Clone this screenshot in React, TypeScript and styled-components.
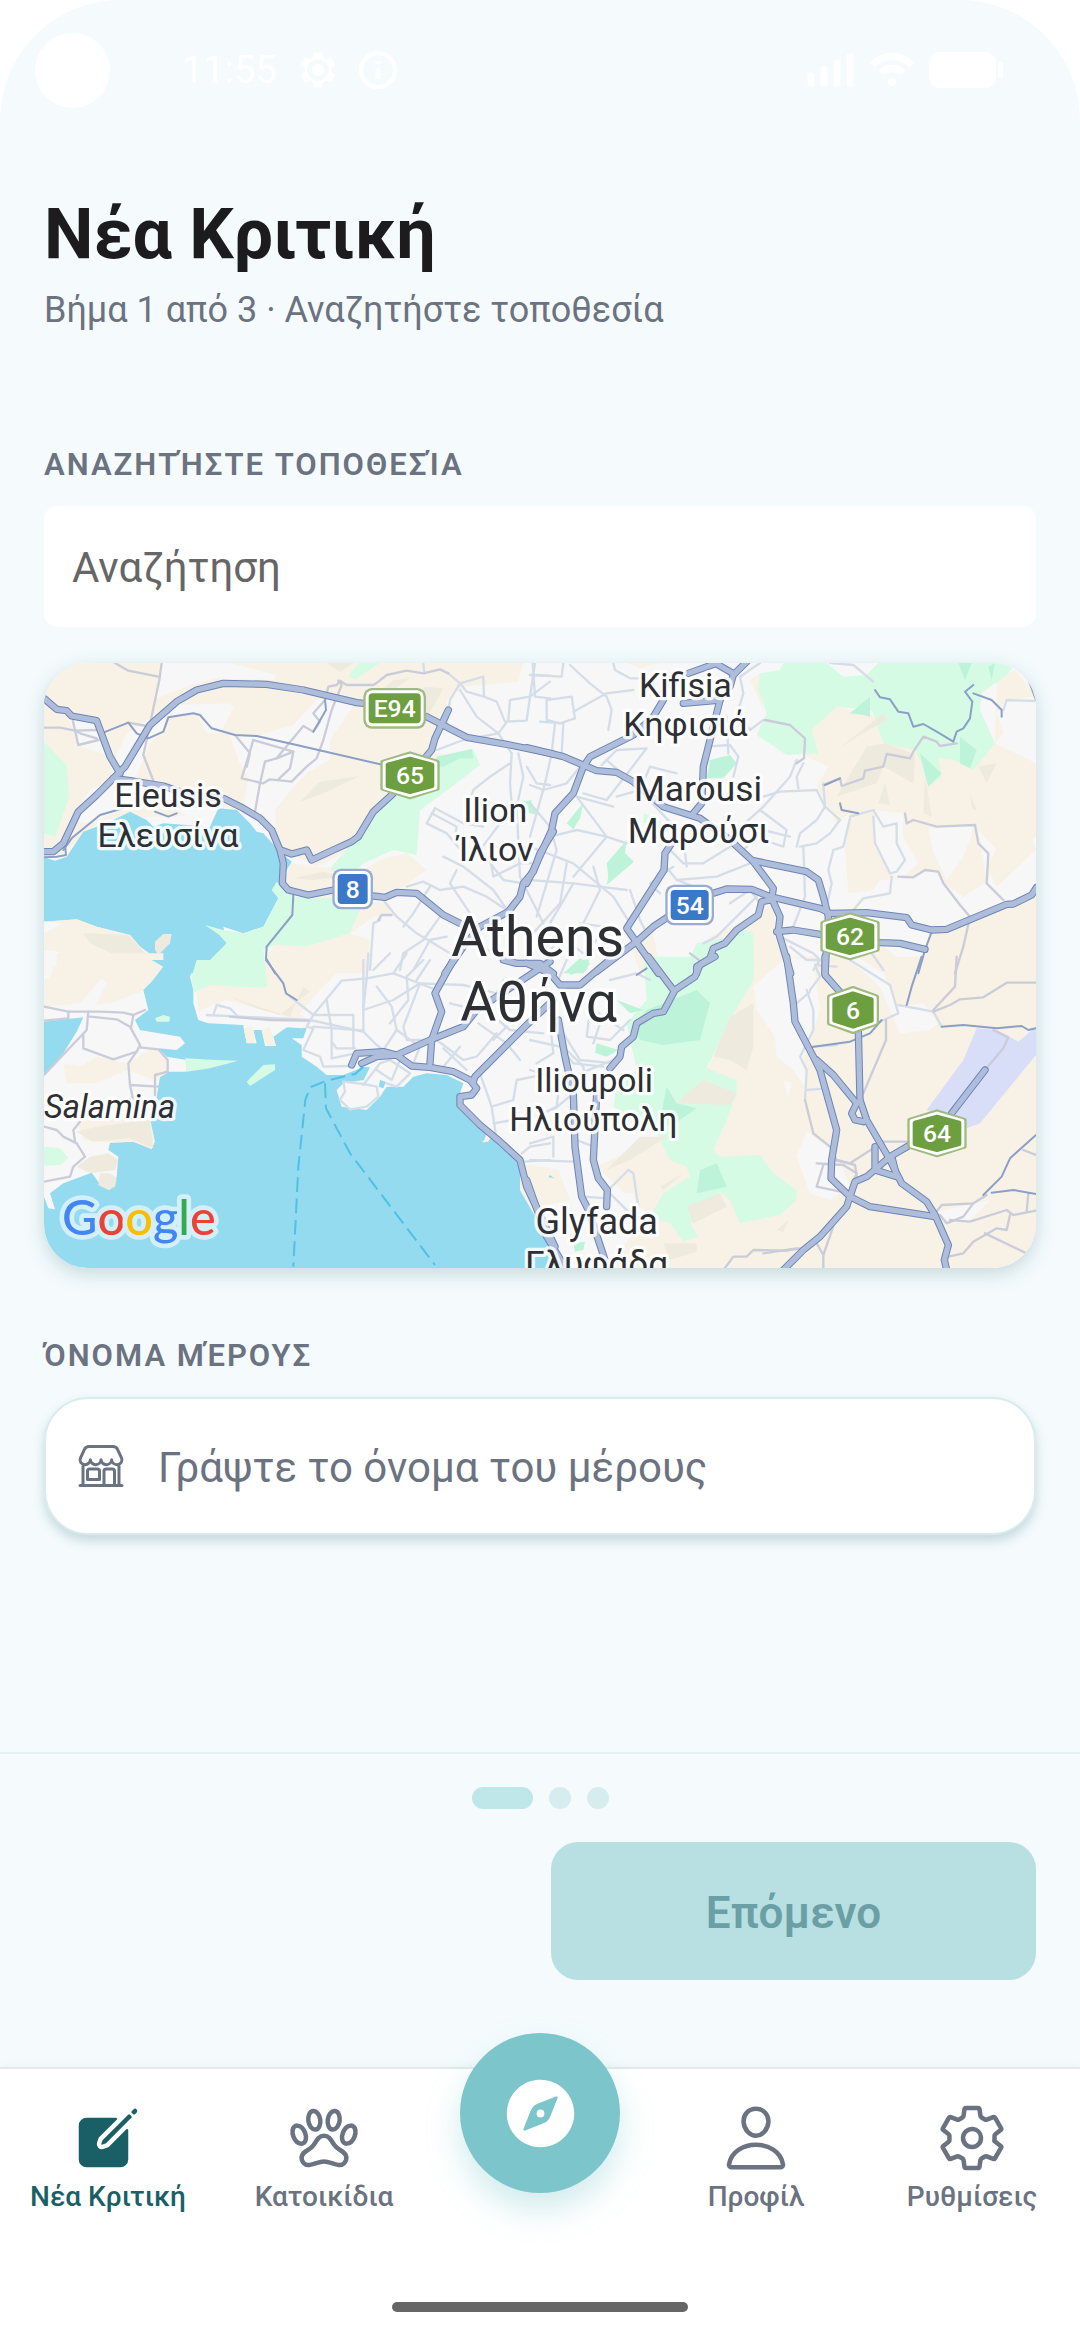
import React from "react";
import styled, { createGlobalStyle } from "styled-components";
import {
  IoCompass,
  IoCreate,
  IoPawOutline,
  IoPersonOutline,
  IoSettingsOutline,
  IoStorefrontOutline,
} from "react-icons/io5";

const color = {
  page: "#f5fbfd",
  ink: "#1c1c1e",
  muted: "#6b7280",
  teal: "#7cc5ca",
  deepTeal: "#1b5f66",
  line: "#e2f1f5",
};

const GlobalStyle = createGlobalStyle`
  *, *::before, *::after { box-sizing: border-box; }
  body {
    margin: 0;
    background: #fff;
    font-family: Roboto, "Noto Sans", sans-serif;
  }
  button, input { font-family: inherit; }
`;

const Screen = styled.div`
  display: flex;
  flex-direction: column;
  min-height: 100vh;
  background: ${color.page};
  border-radius: 120px 120px 0 0;
`;

const StatusBar = styled.div`
  display: flex;
  align-items: center;
  height: 140px;
  padding: 0 76px 0 35px;
  color: #fff;
  font-size: 38px;
`;

const Camera = styled.span`
  width: 75px;
  height: 75px;
  margin-right: 72px;
  border-radius: 50%;
  background: #fff;
`;

const StatusIcons = styled.span<{ $gap: number; $end?: boolean }>`
  display: flex;
  align-items: center;
  gap: ${(p) => p.$gap}px;
  margin-left: ${(p) => (p.$end ? "auto" : "20px")};
`;

const Header = styled.header`
  padding: 52px 44px 0;
`;

const Title = styled.h1`
  margin: 0;
  font-size: 70px;
  line-height: 84px;
  font-weight: 700;
  color: ${color.ink};
`;

const Subtitle = styled.p`
  margin: 12px 0 0;
  font-size: 36px;
  line-height: 44px;
  color: ${color.muted};
`;

const Form = styled.main`
  display: flex;
  flex-direction: column;
  flex: 1;
  padding: 114px 44px 36px;
`;

const FieldLabel = styled.label`
  margin-bottom: 22px;
  font-size: 31px;
  line-height: 38px;
  font-weight: 600;
  letter-spacing: 2px;
  color: ${color.muted};
`;

const SearchInput = styled.input`
  height: 121px;
  padding: 2px 28px 0;
  border: 0;
  border-radius: 14px;
  background: #fff;
  font-size: 42px;
  color: ${color.ink};
  outline: none;
  &::placeholder { color: #666; opacity: 1; }
`;

const MapCard = styled.section`
  margin: 36px 0 69px;
  border-radius: 44px;
  overflow: hidden;
  background: #f7f7f7;
  box-shadow: 0 6px 20px rgba(27, 95, 102, 0.22);
  & > svg { display: block; width: 100%; height: auto; }
`;

const NameField = styled.div`
  display: flex;
  align-items: center;
  gap: 33px;
  height: 138px;
  padding: 0 31px;
  border: 2px solid #d8ecee;
  border-radius: 44px;
  background: #fff;
  color: ${color.muted};
  box-shadow: 0 6px 12px rgba(27, 95, 102, 0.22);
`;

const NameInput = styled.input`
  flex: 1;
  min-width: 0;
  padding: 2px 0 0;
  border: 0;
  background: none;
  font-size: 42px;
  color: ${color.ink};
  outline: none;
  &::placeholder { color: ${color.muted}; opacity: 1; }
`;

const StepFooter = styled.section`
  padding: 33px 44px 87px;
  border-top: 2px solid ${color.line};
`;

const Dots = styled.div`
  display: flex;
  justify-content: center;
  gap: 16px;
  margin-bottom: 33px;
`;

const Dot = styled.span<{ $active?: boolean }>`
  width: ${(p) => (p.$active ? 61 : 22)}px;
  height: 22px;
  border-radius: 11px;
  background: ${(p) => (p.$active ? "#bfe6e9" : "#d5edee")};
`;

const Actions = styled.div`
  display: grid;
  grid-template-columns: 1fr 1fr;
  gap: 22px;
`;

const NextButton = styled.button`
  grid-column: 2;
  height: 138px;
  padding: 4px 0 0;
  border: 0;
  border-radius: 27px;
  background: #b8e0e2;
  color: #6a9fa5;
  font-size: 44px;
  font-weight: 600;
`;

const BottomBar = styled.footer`
  background: #fff;
  border-top: 2px solid #e3e9ea;
  box-shadow: 0 -2px 8px rgba(0, 0, 0, 0.03);
`;

const Tabs = styled.nav`
  display: grid;
  grid-template-columns: repeat(5, 1fr);
  height: 233px;
`;

const Tab = styled.button<{ $active?: boolean }>`
  display: flex;
  flex-direction: column;
  align-items: center;
  gap: 6px;
  padding: 33px 0 0;
  border: 0;
  background: none;
  font-size: 28px;
  line-height: 34px;
  font-weight: 500;
  white-space: nowrap;
  color: ${(p) => (p.$active ? color.deepTeal : color.muted)};
`;

const ExploreButton = styled.button`
  display: flex;
  align-items: center;
  justify-content: center;
  justify-self: center;
  width: 160px;
  height: 160px;
  margin-top: -36px;
  padding: 0;
  border: 0;
  border-radius: 50%;
  background: ${color.teal};
  color: #fff;
  box-shadow: 0 16px 32px rgba(124, 197, 202, 0.35);
`;

const HomeIndicator = styled.div`
  width: 296px;
  height: 10px;
  margin: 0 auto 28px;
  border-radius: 5px;
  background: #666;
`;

/* ---------- map ---------- */

type Shape = [fill: string, points: string];

interface Tile {
  x: number;
  y: number;
  areas: Shape[];
  streets: string[];
  lanes: string[];
  roads: string[];
  highways: string[];
}

const SAND = "#f7f2e5";
const CITY = "#f7f7f7";
const PARK = "#d5fbe5";
const WOOD = "#bdf3d8";
const SEA = "#94dbef";
const RIDGE = "#eeeade";

const tiles: Tile[] = [
  {
    x: 0,
    y: 0,
    areas: [
      [SAND, "42,39 1480,39 1465,95 1300,110 1250,150 1245,220 1215,305 1350,345 1180,440 1000,580 860,650 760,600 700,520 590,470 440,500 260,500 190,530 100,610 42,625"],
      [CITY, "390,39 600,39 740,75 730,90 560,85 480,105 370,150 388,85"],
      [CITY, "110,190 200,210 250,340 290,250 370,200 440,165 600,160 610,175 570,250 530,250 500,192 420,202 395,250 360,280 310,400 260,390 220,310 150,290"],
      [CITY, "600,255 680,258 790,225 860,150 985,145 900,270 900,330 830,370 790,410 735,480 740,590 640,470 655,385 625,330"],
      [CITY, "120,510 180,420 260,385 410,410 520,430 570,470 540,530 440,480 300,470 180,520"],
      [RIDGE, "890,39 970,39 930,65"],
      [RIDGE, "1090,90 1140,85 1060,140 1010,160"],
      [RIDGE, "1180,110 1240,115 1190,205"],
      [RIDGE, "870,395 990,378 880,430 810,455"],
      [PARK, "955,80 985,39 1050,39 975,88"],
      [PARK, "42,275 110,345 118,440 75,560 42,550"],
      [PARK, "1220,325 1330,297 1350,345 1240,430 1170,480 1160,615 1090,600 1000,640 950,690 900,655 985,560 1080,440 1190,400"],
      [WOOD, "1220,320 1325,297 1330,325 1290,325 1240,350 1215,350"],
      [WOOD, "1470,455 1505,450 1500,475 1525,495 1500,490 1485,475"],
      [SAND, "780,640 900,655 950,690 1050,630 1130,610 1190,660 1120,710 1020,740 905,760 820,740 765,700"],
      [RIDGE, "790,685 880,665 935,680 850,690"],
      [SEA, "42,622 75,632 110,620 160,545 200,530 270,500 300,485 350,510 370,530 400,520 540,530 565,475 620,480 660,520 680,545 700,550 745,600 785,635 770,660 750,700 745,745 700,830 640,850 580,830 590,880 560,930 500,970 400,970 365,915 330,890 300,855 200,830 140,808 42,815"],
      [SAND, "42,815 140,808 200,830 300,855 330,890 365,915 400,970 42,970"],
      [CITY, "42,815 100,820 42,850"],
      [CITY, "42,900 90,905 80,970 42,970"],
      [RIDGE, "160,850 295,855 400,970 310,940 180,880"],
      [RIDGE, "375,875 400,852 425,852 420,880 385,915 375,900"],
      [PARK, "740,695 790,740 900,745 1000,730 990,780 960,850 830,890 735,885 700,900 710,970 500,970 590,880 568,855 525,825 580,840 640,850 700,830 745,745 725,720"],
      [SAND, "735,885 830,890 960,850 1020,870 1010,970 730,970 708,920"],
      [SAND, "1000,760 1070,755 1085,795 1030,800 960,850"],
    ],
    streets: [
      "1255,70 1290,100 1360,80 1362,140 1310,125 1290,100 1260,150 1250,220",
      "1362,140 1400,155 1425,215 1490,212 1500,140 1440,150 1435,210 1405,250 1445,310",
      "1290,120 1340,200 1405,250 1300,270 1220,300",
      "1508,39 1515,140 1560,145",
      "1515,75 1560,77",
      "1500,140 1560,95",
      "1445,310 1440,400 1445,460 1410,520 1350,600",
      "1465,310 1480,380 1460,470 1470,680 1540,820",
      "1440,340 1380,380 1330,420 1320,450",
      "1490,350 1520,400 1560,405",
      "1215,475 1300,520 1360,530",
      "1215,475 1190,520 1250,550 1300,610 1350,600",
      "1205,490 1280,530 1275,560",
      "1350,600 1420,690 1480,700",
      "1240,620 1300,650 1390,720 1435,785",
      "1130,710 1180,695 1230,720 1300,710 1370,740 1430,780",
      "1200,710 1150,790 1120,830",
      "1060,750 1100,800 1160,850 1260,910",
      "1020,960 1030,820 1050,810",
      "1230,800 1180,870 1120,910 1110,960",
      "1250,860 1200,870 1150,960",
      "1280,660 1260,700 1320,790",
      "1340,880 1420,930 1560,935",
      "1380,620 1390,680 1470,640 1530,640",
      "1180,40 1183,70",
    ],
    lanes: [
      "255,39 295,62 385,80",
      "395,39 388,90 350,270 340,315 375,405",
      "42,233 90,233 135,242 200,240",
      "128,210 145,285 205,270",
      "135,240 150,250 200,265",
      "295,218 350,228",
      "670,270 635,385 700,400 720,388 785,395 830,350 860,325 880,270 905,180 935,105 925,92",
      "670,270 790,305 780,355 745,388",
      "790,305 740,325 820,228 850,245 870,215 850,190 885,150 895,110 920,105 930,92 950,105 1030,105 1045,95 1070,75 1130,62 1180,70 1230,58 1255,70",
      "615,255 660,310 650,350",
      "705,335 740,325",
      "705,335 690,400 675,485",
      "1045,810 1055,795 1085,795",
    ],
    roads: [
      "220,248 295,218 320,250 355,265 400,245 415,202 490,190 510,195 545,235 615,255 680,258 800,285 1060,345",
      "100,600 125,565 210,495 280,475",
      "42,622 80,620 108,615 105,585",
      "790,735 787,795 710,890 708,925 735,970",
      "885,150 888,180 850,245",
      "375,485 415,500 440,490",
    ],
    highways: [
      "42,605 70,605 100,580 145,485 200,435 250,385 285,350 360,225 440,155 500,120 580,100 710,103 820,120 980,158 1090,170 1190,200 1310,262 1440,285 1570,312",
      "42,145 80,178 110,182 125,198 200,212 240,320 270,370",
      "1255,180 1215,265 1205,300 1180,330 1085,435 1030,485 985,560",
      "985,560 965,575 910,600 845,630 830,600 785,612 752,600",
      "250,385 300,392 400,408 480,435 580,445 640,475 690,505 725,540 750,600 760,640 757,700 775,720 835,735 910,720 1030,738 1065,742 1100,727 1160,730 1240,795 1300,825",
      "1570,545 1530,610 1510,665 1480,700 1470,740 1435,785 1350,830 1300,890 1245,970",
    ],
  },
  {
    x: 1500,
    y: 0,
    areas: [
      [SAND, "290,39 390,39 330,55"],
      [SAND, "660,90 690,70 700,180 670,110"],
      [SAND, "845,240 920,170 1060,200 1155,300 1395,280 1400,90 1455,60 1518,140 1518,600 1440,650 1380,690 1300,740 1240,700 1225,665 1185,660 1150,685 1050,690 1030,720 955,730 945,600 960,490 920,520 860,410 895,350 830,320"],
      [CITY, "1395,280 1420,250 1400,190 1430,150 1518,140 1518,340"],
      [CITY, "1195,535 1335,525 1300,620 1250,690 1210,610"],
      [CITY, "1035,480 1120,490 1120,560 1165,640 1110,690 1080,670 1035,590"],
      [CITY, "1345,540 1420,620 1518,560 1518,750 1420,750 1370,700"],
      [SAND, "1420,560 1500,540 1518,600 1400,710 1370,650"],
      [PARK, "690,70 750,60 760,39 890,39 940,80 1010,75 1045,39 1460,39 1430,75 1355,130 1350,180 1395,280 1330,360 1270,330 1225,325 1235,380 1195,410 1170,330 1155,300 1060,280 1030,190 1020,180 920,170 845,240 865,310 770,315 680,255 710,190 685,120"],
      [WOOD, "960,190 1020,140 1020,200 1000,195"],
      [WOOD, "1285,39 1325,39 1305,90"],
      [WOOD, "1375,50 1395,39 1385,90"],
      [WOOD, "1170,310 1235,370 1195,410"],
      [WOOD, "1290,260 1340,300 1320,355 1290,340"],
      [RIDGE, "920,300 1060,190 1070,210 980,260"],
      [RIDGE, "1010,290 1070,280 1155,315 1150,400 1060,350 1040,400 920,440"],
      [RIDGE, "1345,350 1400,340 1370,400"],
      [RIDGE, "1320,430 1340,480 1325,475"],
      [RIDGE, "1185,380 1205,500 1180,490"],
      [RIDGE, "1065,400 1080,465 1045,460"],
      [WOOD, "540,330 600,315 620,340 580,385 530,385"],
      [WOOD, "160,458 110,520 130,538 150,505"],
      [WOOD, "290,570 285,610 312,635 230,705 235,680 230,640"],
      [PARK, "340,490 380,500 400,525 340,520"],
      [WOOD, "0,450 25,490 0,490"],
      [SAND, "300,880 370,850 390,960 330,970"],
      [SAND, "540,860 690,790 725,760 740,850 770,970 600,970"],
      [PARK, "620,830 670,850 672,970 455,970 500,880 600,860"],
      [WOOD, "150,925 180,940 160,970 100,970"],
      [SAND, "1205,840 1440,765 1518,730 1518,970 850,970 870,900 1050,880 1160,970"],
      [CITY, "860,905 960,900 1080,970 900,970"],
    ],
    streets: [
      "0,75 95,80 100,39",
      "15,39 0,140",
      "50,150 125,140 135,205 90,220 50,210 50,150",
      "120,45 180,100 230,140 245,180 235,240",
      "130,185 230,130 310,120",
      "250,39 255,60 300,85 340,85",
      "30,215 100,220 95,310",
      "75,220 65,310 45,400 0,560",
      "150,350 110,400 40,420 0,405",
      "0,460 60,530 80,600 50,700 20,800",
      "230,330 330,420 460,560 470,650",
      "215,345 260,300 350,295 230,450 160,430",
      "260,440 330,420 360,350 440,370",
      "250,470 140,440 230,560 290,580",
      "60,560 140,540 230,560 180,620 130,680",
      "0,590 130,640 250,740 300,820",
      "0,690 130,700 290,720",
      "130,700 60,820 80,870 30,960",
      "220,830 150,820 120,880 160,910 230,840",
      "300,720 330,810 350,850",
      "410,590 460,640 520,640 600,590",
      "400,640 440,690 560,680 660,640",
      "440,690 520,720",
      "530,290 600,285 625,320 610,380",
      "590,200 595,310",
      "690,39 630,80 640,130 625,180 660,240 700,210",
      "800,330 780,380 700,470 600,560",
      "700,440 750,425 860,420 885,470 860,510 810,550 800,590",
      "690,480 770,540 760,590 700,570",
      "640,600 700,540 780,560",
      "820,340 800,380 805,415",
      "960,505 940,590 910,600 895,660 905,700 890,770",
      "880,400 885,470 930,510 900,550 860,580 810,590",
      "960,500 1030,480 1060,530 1100,520 1100,580 1125,630 1100,665 1080,670 1035,580 1030,500",
      "820,590 825,740 790,830",
      "1085,680 1080,730 1000,745 970,780",
      "600,760 660,720 690,760",
      "520,880 560,860 680,740",
      "750,860 850,910 870,930 850,960",
      "780,890 830,930 870,930",
      "900,39 970,45 1030,95",
      "1420,180 1430,150 1518,153",
      "390,730 360,700 430,650",
      "110,640 90,760 0,860",
      "190,650 210,720 160,820",
      "940,800 970,830 1060,960",
    ],
    lanes: [
      "705,210 780,225 825,265 822,325 800,340",
      "1280,280 1230,288 1220,275 1180,260 1150,305 1140,325 1070,312 1060,350 1005,362 1000,385 935,408 930,385 880,405",
      "1125,490 1130,520 1150,510 1220,530 1335,525 1345,580 1375,610 1370,700 1420,750",
      "1105,680 1150,682 1185,660 1225,665 1240,700 1290,765 1320,800 1300,890 1275,970",
      "480,910 520,940",
    ],
    roads: [
      "1035,120 1050,142 1080,148 1105,185 1135,190 1150,230 1180,222 1220,245 1270,275 1280,245 1300,235 1320,205 1327,155 1305,125 1330,105",
      "1330,130 1385,150 1415,180 1415,200",
      "1490,75 1518,150",
      "1205,845 1185,900 1165,970",
      "930,460 935,480 985,490",
      "885,405 930,385",
    ],
    highways: [
      "-10,293 100,320 200,362 260,367 310,395 400,470 510,505 600,570 670,635 730,715 725,745 750,800 745,845 782,970",
      "655,30 610,75 600,110",
      "560,42 612,72",
      "560,40 475,70",
      "400,150 370,200 310,255 180,320 160,350 130,430 75,490 65,540 20,640 -10,700",
      "570,150 540,270 520,350 518,400 515,460 490,490",
      "460,160 570,150",
      "425,580 405,610 402,660 290,835 385,970",
      "670,632 830,665 865,690 880,740 895,800 885,970",
      "550,730 590,717 665,718 720,740 870,775 900,790 1010,788 1130,803 1145,825 1205,840 1250,838 1430,763 1450,762 1505,735 1520,712",
      "730,748 695,755 685,795 620,840 585,880 550,895 540,925 500,950 500,970",
      "740,845 790,840 870,853 1050,878 1110,880 1185,898",
      "415,800 370,830 320,875 200,965",
    ],
  },
  {
    x: 0,
    y: 930,
    areas: [
      [SAND, "42,20 80,20 80,-20 400,-20 400,20 345,90 240,130 42,150"],
      [CITY, "42,10 80,0 60,50 42,60"],
      [CITY, "150,130 215,55 230,70 190,150 350,145 320,200 42,180 42,140"],
      [SAND, "705,0 950,0 920,40 870,90 800,170 700,160 560,80 500,100 490,60"],
      [SEA, "365,0 500,0 480,50 490,90 490,130 505,180 535,190 640,195 650,250 680,250 670,210 695,210 705,258 738,258 730,230 780,195 830,205 820,235 785,235 815,255 815,290 860,320 890,345 940,345 990,325 1010,320 1000,360 940,370 920,390 935,440 1010,450 1050,410 1070,380 1120,380 1150,350 1190,340 1250,345 1300,370 1280,430 1330,490 1370,520 1360,550 1390,530 1470,600 1470,690 1510,760 1570,850 1570,930 42,930 42,710 55,745 75,748 60,700 100,670 185,638 205,665 240,690 260,650 265,590 235,570 240,548 310,545 365,565 373,545 360,490 380,410 390,350 415,335 470,335 470,300 410,290 385,265 440,270 465,250 450,230 360,215 330,210 315,180 355,150 340,90 365,65 400,20"],
      [SEA, "42,185 160,172 140,215 100,280 42,345"],
      [SAND, "100,310 150,320 200,290 290,310 375,260 410,300 410,340 375,360 290,330 200,370 110,370"],
      [SAND, "140,480 360,475 375,545 365,568 310,545 240,548 160,540"],
      [RIDGE, "140,515 200,500 360,480 370,565 300,535 190,545"],
      [PARK, "42,560 90,565 115,595 90,615 42,617"],
      [RIDGE, "210,640 240,640 260,655 255,680 235,690 205,675"],
      [RIDGE, "140,620 180,590 235,580 265,600 255,630 180,640"],
      [PARK, "500,0 705,0 712,80 640,95 540,75 490,98 485,50"],
      [SAND, "500,100 540,75 720,85 830,180 780,200 540,180 510,180"],
      [RIDGE, "585,105 730,155 780,170 820,80 840,95 740,170"],
      [CITY, "510,150 590,120 820,185 820,205 640,195 510,180"],
      [PARK, "375,175 400,165 420,170 418,185 380,185"],
      [PARK, "465,295 560,300 625,302 540,325 470,335"],
      [PARK, "650,365 700,315 735,313 735,330 660,378"],
      [SAND, "640,200 670,200 675,250 650,248"],
      [SAND, "695,210 720,200 738,258 708,256"],
      [SEA, "990,320 1020,322 1000,362 985,340"],
      [SEA, "1050,360 1068,365 1060,385 1046,380"],
      [SAND, "1470,610 1560,625 1560,760 1510,750 1470,690"],
      [SAND, "1355,545 1385,525 1375,545"],
    ],
    streets: [
      "530,165 840,180 1000,215 1000,0",
      "550,165 560,135 600,145 620,165",
      "780,110 850,165 830,200 850,205 820,270 870,290 880,320 960,318",
      "850,165 935,62 1010,55 1090,40 1130,-20",
      "890,120 905,210 905,295",
      "850,165 970,165 970,265",
      "850,200 1000,212",
      "1000,150 1090,120 1170,70 1300,75",
      "1015,-20 1010,55 1000,150",
      "1090,40 1220,90",
      "1040,80 1085,140 1100,210 1060,270",
      "1130,50 1135,120 1080,190",
      "1170,70 1120,200 1130,240 1180,240",
      "905,295 975,280",
      "905,245 920,265 975,265",
      "1000,215 1040,255 1060,270",
      "1100,210 1170,260 1150,310",
      "1240,265 1310,330",
      "1220,240 1300,300 1340,290 1400,220",
      "1290,260 1240,320",
      "1300,75 1400,100 1420,60",
      "1260,130 1340,150",
      "1345,190 1430,250 1470,300",
      "1380,160 1440,210 1540,220",
      "1350,340 1385,440 1400,540",
      "1385,440 1450,420 1460,360 1560,340",
      "1390,490 1450,480",
      "1475,580 1500,560 1560,550",
      "1480,605 1560,600",
      "1430,200 1390,240",
      "940,365 1000,372 1040,380 1045,410 1010,440 960,448 930,420 945,395 940,365",
      "1000,375 1050,310 1080,300 1140,340 1100,380 1070,370",
      "1040,330 1085,360 1110,300",
      "1080,-20 1030,30",
      "1180,0 1130,50",
      "1200,0 1160,60",
    ],
    lanes: [
      "42,140 115,155 210,155 280,158 310,165 345,150",
      "42,182 115,175 115,155",
      "175,155 170,210 42,345",
      "160,225 160,265 250,298 320,275 330,255 300,200 260,178 180,170",
      "310,165 303,205",
      "330,262 385,268 413,300 413,335 375,345 375,405",
      "320,275 295,310 300,375 310,420",
      "300,375 385,380",
      "42,500 80,510 100,530 140,550 165,590 130,620 120,650 42,665",
      "150,485 130,510 135,545",
      "600,170 720,180 835,182",
    ],
    roads: ["708,0 760,70 768,100 800,120"],
    highways: [
      "1275,-10 1215,100 1235,155 1205,240 1200,310",
      "965,315 980,280 1060,275 1100,285 1200,240 1300,200 1340,150 1560,5",
      "995,310 1040,290 1100,285 1145,318 1200,322 1270,335 1320,360 1340,385 1325,405 1290,410 1290,435 1350,495 1410,545 1470,600 1490,680 1575,860",
      "1570,120 1490,195 1335,350 1330,365",
      "1420,0 1460,10 1530,10 1570,40",
    ],
  },
  {
    x: 1500,
    y: 930,
    areas: [
      [SAND, "600,-10 1518,-10 1518,930 230,930 350,760 200,620 390,530 530,330 600,180"],
      [SAND, "0,620 85,630 120,720 30,740 0,700"],
      [CITY, "670,80 770,-10 850,0 870,150 820,300 830,390 790,330 740,290 735,230 680,150"],
      [CITY, "980,-10 1060,40 1105,140 1180,130 1225,190 1200,210 1110,220 1050,80 960,0"],
      [CITY, "830,515 920,580 960,680 900,720 840,700 800,590"],
      [CITY, "1210,760 1380,720 1320,780 1270,790"],
      [CITY, "760,360 785,370 775,415"],
      [CITY, "180,690 310,700 330,780 240,830 170,740"],
      [PARK, "340,-10 672,-10 670,60 600,180 530,325 620,360 620,400 590,480 550,570 570,590 690,585 730,640 800,690 800,720 750,765 630,790 600,720 570,695 480,790 505,830 460,845 420,790 360,770 400,700 480,650 470,620 420,600 380,520 250,440 260,380 320,330 290,190 350,120"],
      [WOOD, "350,150 500,90 540,130 510,240 400,255 330,240 310,200"],
      [WOOD, "200,250 265,270 230,290 195,278"],
      [WOOD, "260,120 340,150 300,160"],
      [WOOD, "115,30 180,-10 170,30 120,45"],
      [WOOD, "510,630 560,610 590,680 500,700"],
      [WOOD, "410,380 440,430 500,445 420,500 390,480"],
      [RIDGE, "600,170 670,130 670,260 650,330 600,300 550,290"],
      [RIDGE, "440,430 520,360 620,400 600,435"],
      [RIDGE, "470,740 570,700 590,740 490,790"],
      [RIDGE, "390,680 460,640 400,690"],
      [RIDGE, "400,850 500,850 500,875 420,900"],
      [RIDGE, "740,810 775,780 760,815"],
      [RIDGE, "230,630 330,530 410,530 300,600"],
      [PARK, "640,20 672,0 670,60 630,90"],
      ["#d8def8", "1340,205 1400,210 1465,245 1518,200 1518,285 1350,490 1310,505 1190,450 1300,300"],
      [SEA, "0,760 35,830 55,924 0,924"],
      [SEA, "60,645 72,655 55,652"],
      [WOOD, "130,850 165,845 160,870 135,875"],
    ],
    streets: [
      "100,220 150,300 250,310",
      "180,150 170,230 240,240 300,180",
      "110,270 160,320 170,400",
      "150,340 250,300",
      "240,60 320,40 360,60",
      "200,90 190,150 280,210",
      "0,240 90,260 130,310 220,320",
      "0,330 90,360 80,440 20,470",
      "0,600 130,605",
      "0,550 70,530 70,590",
      "140,540 190,560",
      "160,710 232,715",
      "235,690 295,630 310,640 325,740",
      "240,700 300,760",
      "150,470 190,480",
      "840,90 870,50 855,15 920,20",
      "830,90 850,150 850,210 810,290 830,330 825,420",
      "850,260 920,255",
      "830,390 890,385",
      "960,0 1080,75 1105,160 1050,185",
      "1105,135 1210,155 1235,200",
      "800,130 840,95",
      "130,400 70,450",
      "110,0 80,70",
      "170,130 210,190 190,250",
      "60,190 70,280 20,310",
    ],
    lanes: [
      "1280,-10 1275,80 1210,150",
      "1210,155 1260,135 1290,118 1360,112 1430,68 1518,68",
      "1068,180 1068,240 1000,400",
      "825,420 850,520 900,560 920,600 975,615 980,650",
      "860,610 940,615 980,640 955,700 860,680 880,615",
      "910,600 960,610 1060,545 1140,545",
      "585,924 610,890 650,890 670,870 770,872 810,865",
      "860,850 880,885 880,924",
      "920,770 880,885",
      "1215,760 1235,735 1330,730 1370,705",
      "1330,730 1300,770 1250,790 1230,765",
      "1260,780 1320,785 1430,750 1450,765 1518,752",
      "1495,700 1490,755",
      "1480,570 1518,585",
      "1255,890 1300,880 1330,845 1400,805 1430,810 1440,765",
      "1365,820 1490,880",
      "1390,210 1435,232 1420,265 1365,330",
      "700,880 800,865",
    ],
    roads: [
      "1175,-10 1145,80 1130,135",
      "1235,200 1300,195 1400,205 1475,198 1495,210 1518,205",
      "840,262 960,245 1020,220 1055,180",
      "1518,525 1440,595 1415,650 1360,705",
      "1385,698 1450,690 1518,702",
      "320,45 350,25",
    ],
    highways: [
      "770,-10 790,130 795,185 850,290 870,330 920,510 905,600 903,655 960,710 1020,740 1215,770",
      "860,300 910,345 980,430 965,460 975,480 1000,485",
      "885,-10 885,45 960,130 985,210 990,420 1010,480 1080,600 1115,670 1190,725 1215,765 1255,855 1243,900 1250,930",
      "1140,555 1080,590 1010,650 975,665 950,740 870,830 820,870 760,930",
      "1035,560 1035,630 1100,650 1088,600",
      "1365,330 1265,460",
      "555,-10 510,15 495,50 435,90 400,155 370,160 320,190 310,230 275,260 270,290 240,325",
      "355,-10 430,90",
      "-10,10 60,40 90,75 150,75 250,-10",
      "85,180 105,290 130,400 135,560 155,710 175,750 205,840 235,930",
      "200,400 190,600 205,655 232,690 230,740",
      "-10,660 50,830 110,930",
    ],
  },
];

const places: [x: number, y: number, size: number, text: string][] = [
  [414, 472, 102, "Eleusis"],
  [414, 590, 102, "Ελευσίνα"],
  [1396, 515, 102, "Ilion"],
  [1396, 632, 102, "Ίλιον"],
  [1966, 140, 102, "Kifisia"],
  [1966, 258, 102, "Κηφισιά"],
  [2004, 453, 106, "Marousi"],
  [2006, 578, 106, "Μαρούσι"],
  [1523, 917, 166, "Athens"],
  [1526, 1112, 166, "Αθήνα"],
  [1692, 1325, 101, "Ilioupoli"],
  [1690, 1442, 101, "Ηλιούπολη"],
  [1700, 1751, 108, "Glyfada"],
  [1700, 1878, 106, "Γλυφάδα"],
];

const MapText = styled.text`
  font-family: Roboto, "Noto Sans", sans-serif;
  fill: #2d2f33;
  stroke: rgba(255, 255, 255, 0.85);
  stroke-width: 20px;
  stroke-linejoin: round;
  paint-order: stroke;
`;

const ShieldText = styled.text`
  font-family: Roboto, sans-serif;
  font-size: 74px;
  font-weight: 500;
  fill: #fff;
  text-anchor: middle;
`;

const LogoText = styled.text`
  font-family: Lato, sans-serif;
  font-size: 146px;
  font-weight: 500;
  stroke: #d3f0f8;
  stroke-width: 28px;
  stroke-linejoin: round;
  paint-order: stroke;
`;

function BoxShield({ x, y, w, fill, edge, label }: { x: number; y: number; w: number; fill: string; edge: string; label: string }) {
  return (
    <g transform={`translate(${x} ${y})`}>
      <rect x={-w / 2} y={-61} width={w} height={122} rx={26} fill={edge} />
      <rect x={-w / 2 + 7} y={-54} width={w - 14} height={108} rx={20} fill="#fff" />
      <rect x={-w / 2 + 16} y={-45} width={w - 32} height={90} rx={12} fill={fill} />
      <ShieldText y={26}>{label}</ShieldText>
    </g>
  );
}

function HexShield({ x, y, w = 178, label }: { x: number; y: number; w?: number; label: string }) {
  const hex = (inset: number) => {
    const a = w / 2 - inset;
    return `0,${-72 + inset} ${a},${-43 + inset / 2} ${a},${43 - inset / 2} 0,${72 - inset} ${-a},${43 - inset / 2} ${-a},${-43 + inset / 2}`;
  };
  return (
    <g transform={`translate(${x} ${y})`} strokeLinejoin="round" strokeWidth={12}>
      <polygon points={hex(6)} fill="#9fbb82" stroke="#9fbb82" />
      <polygon points={hex(13)} fill="#fff" stroke="#fff" />
      <polygon points={hex(22)} fill="#6d9f40" stroke="#6d9f40" />
      <ShieldText y={26} strokeWidth={0}>
        {label}
      </ShieldText>
    </g>
  );
}

type LineLayer = "streets" | "lanes" | "roads" | "highways";

function Lines({ layer, stroke, width }: { layer: LineLayer; stroke: string; width: number }) {
  return (
    <g fill="none" stroke={stroke} strokeWidth={width} strokeLinejoin="round" strokeLinecap="round">
      {tiles.map((t) => (
        <g key={`${t.x}-${t.y}`} transform={`translate(${t.x} ${t.y})`}>
          {t[layer].map((points) => (
            <polyline key={points} points={points} />
          ))}
        </g>
      ))}
    </g>
  );
}

function AthensMap() {
  return (
    <svg viewBox="42 39 2976 1815" role="img" aria-label="Athens">
      <rect x={42} y={39} width={2976} height={1815} fill={CITY} />
      {tiles.map((t) => (
        <g key={`${t.x}-${t.y}`} transform={`translate(${t.x} ${t.y})`}>
          {t.areas.map(([fill, points]) => (
            <polygon key={points} points={points} fill={fill} />
          ))}
        </g>
      ))}
      <Lines layer="streets" stroke="#d5dee8" width={7} />
      <Lines layer="lanes" stroke="#cbccd9" width={7} />
      <Lines layer="roads" stroke="#8c9fc7" width={6} />
      <Lines layer="highways" stroke="#6d84b8" width={22} />
      <Lines layer="highways" stroke="#adbdda" width={16} />
      <g fill="none" stroke="#4fc0e6" strokeWidth={6} strokeDasharray="44 20">
        <polyline points="1000,1250 975,1272 890,1292 840,1312 826,1350 805,1550 790,1850" />
        <polyline points="885,1300 888,1375 960,1510 1215,1845" />
      </g>
      {places.map(([x, y, size, text]) => (
        <MapText key={text} x={x} y={y} fontSize={size} textAnchor="middle">
          {text}
        </MapText>
      ))}
      <MapText x={42} y={1404} fontSize={98} fontStyle="italic">
        Salamina
      </MapText>
      <BoxShield x={1094} y={175} w={188} fill="#6d9f40" edge="#9fbb82" label="E94" />
      <BoxShield x={968} y={717} w={122} fill="#3b78c8" edge="#9aabd2" label="8" />
      <BoxShield x={1979} y={765} w={146} fill="#3b78c8" edge="#9aabd2" label="54" />
      <HexShield x={1140} y={376} label="65" />
      <HexShield x={2460} y={859} label="62" />
      <HexShield x={2469} y={1080} w={156} label="6" />
      <HexShield x={2721} y={1450} label="64" />
      <LogoText x={96} y={1754}>
        <tspan fill="#4285f4">G</tspan>
        <tspan fill="#ea4335">o</tspan>
        <tspan fill="#fbbc05">o</tspan>
        <tspan fill="#4285f4">g</tspan>
        <tspan fill="#34a853">l</tspan>
        <tspan fill="#ea4335">e</tspan>
      </LogoText>
    </svg>
  );
}

/* ---------- status icons ---------- */

const GearGlyph = () => (
  <svg width="42" height="42" viewBox="0 0 24 24" fill="#fff">
    <path
      fillRule="evenodd"
      d="M19.43 12.98c.04-.32.07-.64.07-.98s-.03-.66-.07-.98l2.11-1.65c.19-.15.24-.42.12-.64l-2-3.46c-.12-.22-.39-.3-.61-.22l-2.49 1a7.3 7.3 0 0 0-1.69-.98l-.38-2.65A.49.49 0 0 0 14 2h-4c-.25 0-.46.18-.49.42l-.38 2.65c-.61.25-1.17.59-1.69.98l-2.49-1c-.23-.09-.49 0-.61.22l-2 3.46c-.13.22-.07.49.12.64l2.11 1.65a8 8 0 0 0 0 1.96l-2.11 1.65c-.19.15-.24.42-.12.64l2 3.46c.12.22.39.3.61.22l2.49-1c.52.4 1.08.73 1.69.98l.38 2.65c.03.24.24.42.49.42h4c.25 0 .46-.18.49-.42l.38-2.65c.61-.25 1.17-.59 1.69-.98l2.49 1c.23.09.49 0 .61-.22l2-3.46c.12-.22.07-.49-.12-.64zM12 5.8a6.2 6.2 0 1 0 0 12.4 6.2 6.2 0 0 0 0-12.4z"
    />
    <circle cx="12" cy="12" r="3.4" />
  </svg>
);

const InfoGlyph = () => (
  <svg width="38" height="38" viewBox="0 0 38 38" fill="none" stroke="#fff">
    <circle cx="19" cy="19" r="17" strokeWidth="4" />
    <path d="M19 17v11M19 10v3" strokeWidth="5" />
  </svg>
);

const SignalGlyph = () => (
  <svg width="48" height="34" viewBox="0 0 48 34" stroke="#fff" strokeWidth="7" strokeLinecap="round">
    <path d="M4 23v7M17 17v13M30 10v20M43 4v26" />
  </svg>
);

const WifiGlyph = () => (
  <svg width="46" height="34" viewBox="0 0 46 34" fill="none" stroke="#fff" strokeWidth="7">
    <path d="M3 12a28 28 0 0 1 40 0M12 20a16 16 0 0 1 22 0" />
    <circle cx="23" cy="29" r="4" fill="#fff" stroke="none" />
  </svg>
);

const BatteryGlyph = () => (
  <svg width="75" height="36" viewBox="0 0 75 36" fill="#fff">
    <rect width="67" height="36" rx="11" />
    <rect x="69" y="10" width="5" height="16" rx="2" />
  </svg>
);

export default function App() {
  return (
    <>
      <GlobalStyle />
      <Screen>
        <StatusBar>
          <Camera />
          <span>11:55</span>
          <StatusIcons $gap={20}>
            <GearGlyph />
            <InfoGlyph />
          </StatusIcons>
          <StatusIcons $gap={14} $end>
            <SignalGlyph />
            <WifiGlyph />
            <BatteryGlyph />
          </StatusIcons>
        </StatusBar>

        <Header>
          <Title>Νέα Κριτική</Title>
          <Subtitle>Βήμα 1 από 3 · Αναζητήστε τοποθεσία</Subtitle>
        </Header>

        <Form>
          <FieldLabel htmlFor="place-search">ΑΝΑΖΗΤΉΣΤΕ ΤΟΠΟΘΕΣΊΑ</FieldLabel>
          <SearchInput id="place-search" type="text" placeholder="Αναζήτηση" />
          <MapCard>
            <AthensMap />
          </MapCard>
          <FieldLabel htmlFor="place-name">ΌΝΟΜΑ ΜΈΡΟΥΣ</FieldLabel>
          <NameField>
            <IoStorefrontOutline size={48} />
            <NameInput id="place-name" type="text" placeholder="Γράψτε το όνομα του μέρους" />
          </NameField>
        </Form>

        <StepFooter>
          <Dots>
            <Dot $active />
            <Dot />
            <Dot />
          </Dots>
          <Actions>
            <NextButton type="button" disabled>
              Επόμενο
            </NextButton>
          </Actions>
        </StepFooter>

        <BottomBar>
          <Tabs>
            <Tab type="button" $active>
              <IoCreate size={72} />
              Νέα Κριτική
            </Tab>
            <Tab type="button">
              <IoPawOutline size={72} />
              Κατοικίδια
            </Tab>
            <ExploreButton type="button" aria-label="Εξερεύνηση">
              <IoCompass size={83} />
            </ExploreButton>
            <Tab type="button">
              <IoPersonOutline size={72} />
              Προφίλ
            </Tab>
            <Tab type="button">
              <IoSettingsOutline size={72} />
              Ρυθμίσεις
            </Tab>
          </Tabs>
          <HomeIndicator />
        </BottomBar>
      </Screen>
    </>
  );
}
